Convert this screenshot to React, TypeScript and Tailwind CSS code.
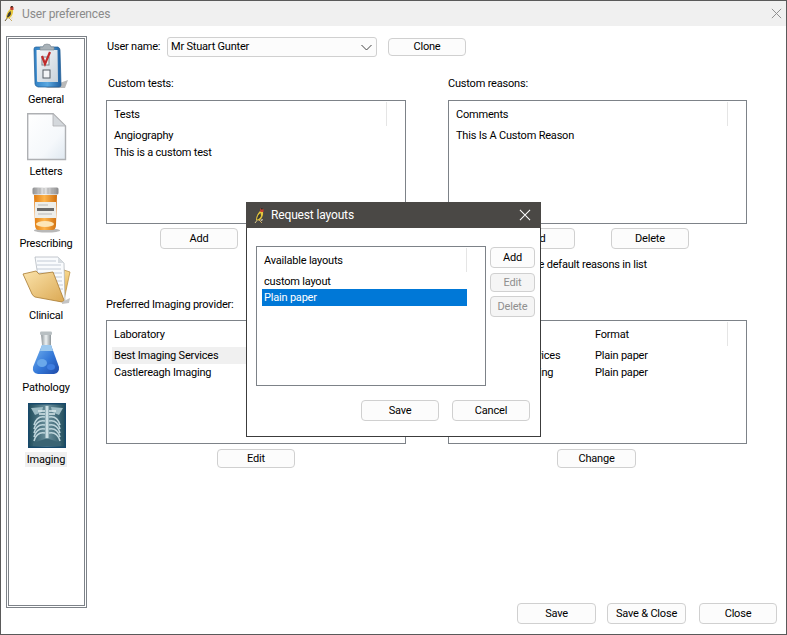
import React from "react";

function Finch({ dark = false }: { dark?: boolean }) {
  return (
    <svg width="11" height="17" viewBox="0 0 11 17" className="shrink-0">
      <path d="M1 16 L4 12" stroke={dark ? "#d8c890" : "#6b5a30"} strokeWidth="1" fill="none" />
      <path d="M5 13 L8 16" stroke="#c8a860" strokeWidth="1" fill="none" />
      <path d="M2 13 C2 9 4 6 6 4 L9 5 C9.5 8 8 12 5 13.5 Z" fill="#e6c63c" />
      <path d="M3 12 C3.5 9 5 7 6.5 6 L7 9 C6 11 4.5 12.5 3 12.5 Z" fill="#3a3a34" />
      <path d="M6 2 C7 0.8 9 1 9.5 2.5 L9.5 5 L6.5 5 Z" fill="#c8402e" />
      <path d="M7 1 L9 1.2 L8.6 2.6 L7 2.6 Z" fill="#2e2e2a" />
      <path d="M6 13 L9 12 L8 14 Z" fill="#efe3c2" />
    </svg>
  );
}

function Close({ color, size = 13 }: { color: string; size?: number }) {
  return (
    <svg width={size} height={size} viewBox="0 0 13 13" className="shrink-0">
      <path d="M1 1 L12 12 M12 1 L1 12" stroke={color} strokeWidth="1.1" fill="none" />
    </svg>
  );
}

function Btn({ children, cls, off = false }: { children: React.ReactNode; cls: string; off?: boolean }) {
  return (
    <div
      className={`flex items-center justify-center rounded-[4px] border border-[#d0d0d0] shrink-0 pt-[1px] ${off ? "bg-[#f5f5f5] text-[#8f8f8f]" : "bg-[#fcfcfc] text-black"} ${cls}`}
    >
      {children}
    </div>
  );
}

function Clipboard() {
  return (
    <svg width="36" height="46" viewBox="0 0 36 46">
      <defs>
        <linearGradient id="cbBlue" x1="0" y1="0" x2="1" y2="0">
          <stop offset="0" stopColor="#2f7fc4" />
          <stop offset="0.5" stopColor="#5aa8e0" />
          <stop offset="1" stopColor="#1f5f9f" />
        </linearGradient>
        <linearGradient id="cbPaper" x1="0" y1="0" x2="1" y2="1">
          <stop offset="0" stopColor="#f6f8fa" />
          <stop offset="1" stopColor="#c9d2da" />
        </linearGradient>
      </defs>
      <path d="M24 41 L35 37 L32 45 L12 45 Z" fill="#b9b9b9" />
      <path d="M1 6 Q1 4 3 4 L25 4 Q27 5 27 7 L28 42 Q28 44 26 44 L5 44 Q2 43 2 41 Z" fill="url(#cbBlue)" stroke="#1d5a92" strokeWidth="0.7" />
      <path d="M3.5 7 L24.5 7 L25 39 L5 39 Q4 39 4 38 Z" fill="url(#cbPaper)" />
      <path d="M7 4 L10 4 Q10 1 14 1 Q18 1 18 4 L21 4 L21 7 L7 7 Z" fill="#a9b2b8" stroke="#7b858c" strokeWidth="0.6" />
      <rect x="9" y="14" width="7" height="8" fill="#eef1f3" stroke="#7b828a" />
      <path d="M9 13 L12 21 L17 9" stroke="#c02a2a" strokeWidth="2.2" fill="none" />
      <rect x="10" y="27" width="7" height="8" fill="#f2f4f6" stroke="#555c64" />
    </svg>
  );
}

function Page() {
  return (
    <svg width="40" height="48" viewBox="0 0 40 48">
      <defs>
        <linearGradient id="pg" x1="0" y1="0" x2="1" y2="1">
          <stop offset="0" stopColor="#ffffff" />
          <stop offset="0.65" stopColor="#f5f8fb" />
          <stop offset="1" stopColor="#dfe8f0" />
        </linearGradient>
      </defs>
      <path d="M0.7 0.7 L26 0.7 L38.5 13 L38.5 46.5 L0.7 46.5 Z" fill="url(#pg)" stroke="#aeb0b3" strokeWidth="1.4" />
      <path d="M26 0.7 L26 13 L38.5 13 Z" fill="#d4d8dc" stroke="#aeb0b3" strokeWidth="0.8" />
    </svg>
  );
}

function Bottle() {
  return (
    <svg width="28" height="46" viewBox="0 0 28 46">
      <defs>
        <linearGradient id="capG" x1="0" y1="0" x2="1" y2="0">
          <stop offset="0" stopColor="#8f9092" />
          <stop offset="0.45" stopColor="#e8e8e8" />
          <stop offset="1" stopColor="#8a8a8c" />
        </linearGradient>
        <linearGradient id="btG" x1="0" y1="0" x2="1" y2="0">
          <stop offset="0" stopColor="#e07c12" />
          <stop offset="0.45" stopColor="#fdb44c" />
          <stop offset="1" stopColor="#d06f0e" />
        </linearGradient>
      </defs>
      <ellipse cx="15" cy="43.5" rx="13" ry="2" fill="#b8b8b8" />
      <path d="M2 8 L25 8 L24 38 Q24 43 20 43 L7 43 Q3 43 3 38 Z" fill="url(#btG)" />
      <rect x="0.5" y="0.5" width="26" height="7" rx="1.5" fill="url(#capG)" />
      <path d="M4 1 V7 M8 1 V7 M12 1 V7 M16 1 V7 M20 1 V7 M23 1 V7" stroke="#a4a4a4" strokeWidth="0.7" />
      <rect x="3" y="15" width="21" height="16" fill="#eeeeea" />
      <rect x="5" y="21" width="17" height="3" fill="#6a6a6a" />
      <path d="M6 18 H16 M6 27 H20" stroke="#b8b8b8" strokeWidth="1" />
      <ellipse cx="13" cy="37" rx="9" ry="3" fill="#fde6b8" />
    </svg>
  );
}

function Folder() {
  return (
    <svg width="49" height="49" viewBox="0 0 49 49">
      <defs>
        <linearGradient id="fdB" x1="0" y1="0" x2="0" y2="1">
          <stop offset="0" stopColor="#f8d88e" />
          <stop offset="1" stopColor="#d9a545" />
        </linearGradient>
        <linearGradient id="fdF" x1="0" y1="0" x2="1" y2="1">
          <stop offset="0" stopColor="#fbe3ab" />
          <stop offset="1" stopColor="#dba954" />
        </linearGradient>
      </defs>
      <path d="M42 14 L48 16 L42 44 L38 44 Z" fill="url(#fdB)" stroke="#b6883a" strokeWidth="0.7" />
      <path d="M13 1 L36 1 L42 7 L43 46 L19 40 Z" fill="#f9fbfd" stroke="#a9b0b8" strokeWidth="0.7" />
      <path d="M36 1 L36 7 L42 7 Z" fill="#d8dde2" />
      <path d="M15 5 L34 5 M15 9 L39 9 M15 13 L39 13 M16 17 L40 17 M16 21 L40 21 M17 25 L40 25 M17 29 L41 29 M18 33 L41 33" stroke="#b6c0cc" strokeWidth="0.8" />
      <path d="M1 18 L14 15 L17 18 L31 16 L42 44 Q42 46 40 46 L13 41 Q11 40 10 38 Z" fill="url(#fdF)" stroke="#a87a30" strokeWidth="0.8" />
      <path d="M40 46 L48 42 L47 47 L40 48 Z" fill="#c4c4c4" />
    </svg>
  );
}

function Flask() {
  return (
    <svg width="28" height="46" viewBox="0 0 28 46">
      <defs>
        <linearGradient id="flG" x1="0" y1="0" x2="1" y2="1">
          <stop offset="0" stopColor="#79b7f0" />
          <stop offset="0.55" stopColor="#3478d8" />
          <stop offset="1" stopColor="#1f4aa8" />
        </linearGradient>
        <linearGradient id="neck" x1="0" y1="0" x2="1" y2="0">
          <stop offset="0" stopColor="#8a9296" />
          <stop offset="0.5" stopColor="#eef2f3" />
          <stop offset="1" stopColor="#8c9498" />
        </linearGradient>
      </defs>
      <path d="M9 3 L19 3 L19 14 L10 14 Z" fill="url(#neck)" />
      <rect x="8" y="0.5" width="12" height="3.5" rx="1.2" fill="#b8bfc2" />
      <path d="M10 14 L19 14 L27 36 Q27.5 42 22 43 L6 43 Q0 42 1 36 Z" fill="url(#flG)" />
      <path d="M10 14 L19 14 L21 20 L8 20 Z" fill="#9cc8ee" />
      <ellipse cx="10" cy="32" rx="5" ry="4" fill="#6aa8ea" />
      <ellipse cx="19" cy="36" rx="4" ry="3" fill="#3f7ee0" />
    </svg>
  );
}

function Xray() {
  const ribsL = [14, 18, 22, 26, 30];
  return (
    <svg width="38" height="45" viewBox="0 0 38 45">
      <defs>
        <linearGradient id="xg" x1="0" y1="0" x2="1" y2="0">
          <stop offset="0" stopColor="#24505f" />
          <stop offset="0.5" stopColor="#6d929e" />
          <stop offset="1" stopColor="#24505f" />
        </linearGradient>
      </defs>
      <rect width="38" height="45" fill="#17496b" />
      <rect x="1.5" y="1.5" width="35" height="42" fill="url(#xg)" />
      <path d="M3 5 L15 4 L14 9 L7 12 Z M35 5 L23 4 L24 9 L31 12 Z" fill="#9dbcc4" />
      <rect x="17.5" y="3" width="3" height="32" fill="#c9dde2" />
      {ribsL.map((y) => (
        <React.Fragment key={y}>
          <path d={`M17 ${y} C12 ${y - 1} 8 ${y + 1} 6 ${y + 8}`} stroke="#bfd6dc" strokeWidth="1.6" fill="none" />
          <path d={`M21 ${y} C26 ${y - 1} 30 ${y + 1} 32 ${y + 8}`} stroke="#bfd6dc" strokeWidth="1.6" fill="none" />
        </React.Fragment>
      ))}
      <path d="M10 8 H17 M21 8 H28 M11 11 H17 M21 11 H27" stroke="#d9e7ea" strokeWidth="1.4" />
      <path d="M5 40 L17 36 L21 36 L33 40 L33 43 L5 43 Z" fill="#3b6473" />
    </svg>
  );
}

function NavItem({ icon, label, active = false, shift = "pb-[3px]" }: { icon: React.ReactNode; label: string; active?: boolean; shift?: string }) {
  return (
    <div className="flex flex-col items-center h-[72px] shrink-0">
      <div className={`h-[51px] flex items-end justify-center ${shift}`}>{icon}</div>
      <div className={`h-[15px] leading-[15px] px-[2px] ${active ? "bg-[#f0f0f0]" : ""}`}>{label}</div>
    </div>
  );
}

function Header({ title, sep }: { title: string; sep: string }) {
  return (
    <div className="relative h-[25px] pt-[4px] flex items-center pl-[7px]">
      <span>{title}</span>
      <div className={`absolute top-[1px] bottom-0 w-[1px] bg-[#e5e5e5] ${sep}`} />
    </div>
  );
}

export default function App() {
  return (
    <div className="relative w-[787px] h-[635px] box-border border border-[#5a5a5a] bg-white flex flex-col overflow-hidden text-black text-[11px] tracking-[-0.2px] [font-family:Roboto,sans-serif]">
      <div className="h-[25px] shrink-0 bg-[#f0f0f0] flex items-center pl-[3px] pr-[4px] text-[12px] tracking-[-0.15px] text-[#8a8a8a]">
        <Finch />
        <span className="ml-[7px]">User preferences</span>
        <div className="ml-auto">
          <Close color="#8a8a8a" size={11} />
        </div>
      </div>

      <div className="flex flex-1 min-h-0">
        <div className="ml-[5px] mt-[10px] w-[81px] h-[572px] shrink-0 border border-[#7d8288] p-[1px]">
          <div className="h-full border border-[#7d8288] flex flex-col pr-[1px] pt-[2px]">
            <NavItem icon={<Clipboard />} label="General" shift="ml-[9px] pb-[3px]" />
            <NavItem icon={<Page />} label="Letters" shift="ml-[2px] pb-[3px]" />
            <NavItem icon={<Bottle />} label="Prescribing" />
            <NavItem icon={<Folder />} label="Clinical" />
            <NavItem icon={<Flask />} label="Pathology" />
            <NavItem icon={<Xray />} label="Imaging" active shift="ml-[2px] pb-[4px]" />
          </div>
        </div>

        <div className="ml-[19px] flex-1 flex flex-col pt-[11px] pr-[9px] pb-[10px]">
          <div className="h-[20px] flex items-center">
            <span className="w-[61px] pl-[1px] shrink-0">User name:</span>
            <div className="w-[210px] h-[20px] rounded-[3px] border border-[#d0d0d0] bg-[#fcfcfc] flex items-center pl-[3px] pr-[3px] pt-[1px]">
              <span>Mr Stuart Gunter</span>
              <svg width="11" height="7" viewBox="0 0 11 7" className="ml-auto mr-[1px]">
                <path d="M0.5 1 L5.5 6 L10.5 1" stroke="#444" strokeWidth="1" fill="none" />
              </svg>
            </div>
            <Btn cls="ml-[11px] w-[78px] h-[18px]">Clone</Btn>
          </div>

          <div className="mt-[18px] grid grid-cols-[300px_299px] gap-x-[42px]">
            <div className="h-[18px] flex items-center pl-[2px]">Custom tests:</div>
            <div className="h-[18px] flex items-center">Custom reasons:</div>
          </div>

          <div className="mt-[7px] grid grid-cols-[300px_299px] gap-x-[42px]">
            <div className="h-[124px] border border-[#7d8288]">
              <Header title="Tests" sep="left-[279px]" />
              <div className="pl-[7px] leading-[17px] pt-[1px]">
                <div>Angiography</div>
                <div>This is a custom test</div>
              </div>
            </div>
            <div className="h-[124px] border border-[#7d8288]">
              <Header title="Comments" sep="left-[278px]" />
              <div className="pl-[7px] leading-[17px] pt-[1px]">
                <div>This Is A Custom Reason</div>
              </div>
            </div>
          </div>

          <div className="mt-[4px] grid grid-cols-[300px_299px] gap-x-[42px]">
            <div className="pl-[54px]">
              <Btn cls="w-[78px] h-[21px]">Add</Btn>
            </div>
            <div className="pl-[49px] flex gap-[36px]">
              <Btn cls="w-[78px] h-[21px]">Add</Btn>
              <Btn cls="w-[78px] h-[21px]">Delete</Btn>
            </div>
          </div>

          <div className="mt-[8px] h-[16px] w-[541px] flex items-center justify-end">
            <div className="w-[13px] h-[13px] border border-[#555] shrink-0" />
            <span className="ml-[7px]">Include default reasons in list</span>
          </div>

          <div className="mt-[23px] h-[18px] flex items-center">Preferred Imaging provider:</div>

          <div className="mt-[6px] grid grid-cols-[300px_299px] gap-x-[42px]">
            <div className="h-[124px] border border-[#7d8288]">
              <Header title="Laboratory" sep="left-[279px]" />
              <div className="pl-[5px] pr-[1px] leading-[17px] pt-[1px]">
                <div className="bg-[#f0f0f0] pl-[2px]">Best Imaging Services</div>
                <div className="pl-[2px]">Castlereagh Imaging</div>
              </div>
            </div>
            <div className="h-[124px] border border-[#7d8288]">
              <div className="relative h-[25px] pt-[4px] flex items-center pl-[7px]">
                <span className="w-[139px]">Laboratory</span>
                <span>Format</span>
                <div className="absolute top-[1px] bottom-0 left-[278px] w-[1px] bg-[#e5e5e5]" />
              </div>
              <div className="pl-[7px] leading-[17px] pt-[1px]">
                <div className="flex">
                  <span className="w-[139px]">Best Imaging Services</span>
                  <span>Plain paper</span>
                </div>
                <div className="flex">
                  <span className="w-[139px]">Castlereagh Imaging</span>
                  <span>Plain paper</span>
                </div>
              </div>
            </div>
          </div>

          <div className="mt-[5px] grid grid-cols-[300px_299px] gap-x-[42px]">
            <div className="pl-[111px]">
              <Btn cls="w-[78px] h-[19px]">Edit</Btn>
            </div>
            <div className="pl-[109px]">
              <Btn cls="w-[79px] h-[19px]">Change</Btn>
            </div>
          </div>

          <div className="mt-auto flex justify-end">
            <Btn cls="w-[79px] h-[21px]">Save</Btn>
            <Btn cls="ml-[11px] w-[79px] h-[21px]">Save &amp; Close</Btn>
            <Btn cls="ml-[13px] w-[78px] h-[21px]">Close</Btn>
          </div>
        </div>
      </div>

      {/* Request layouts dialog */}
      <div className="absolute left-[245px] top-[201px] w-[295px] h-[235px] box-border border border-[#3c3c3c] border-t-0 bg-white flex flex-col">
        <div className="h-[26px] -mx-[1px] shrink-0 bg-[#4a4845] flex items-center pl-[8px] pr-[10px] text-[12px] tracking-[-0.15px] text-white">
          <Finch dark />
          <span className="ml-[6px]">Request layouts</span>
          <div className="ml-auto">
            <Close color="#ffffff" size={12} />
          </div>
        </div>
        <div className="flex pl-[9px] pt-[18px] pr-[5px]">
          <div className="w-[230px] h-[140px] border border-[#7d8288] shrink-0">
            <div className="relative h-[25px] pt-[4px] flex items-center pl-[7px]">
              <span>Available layouts</span>
              <div className="absolute top-[1px] bottom-0 left-[209px] w-[1px] bg-[#e5e5e5]" />
            </div>
            <div className="pl-[5px] w-[210px] leading-[17px]">
              <div className="pl-[2px] pt-[1px] h-[17px]">custom layout</div>
              <div className="pl-[2px] bg-[#0078d7] text-white">Plain paper</div>
            </div>
          </div>
          <div className="ml-[4px] flex flex-col">
            <Btn cls="w-[45px] h-[21px] mt-[1px]">Add</Btn>
            <Btn cls="w-[45px] h-[19px] mt-[5px]" off>Edit</Btn>
            <Btn cls="w-[45px] h-[21px] mt-[4px]" off>Delete</Btn>
          </div>
        </div>
        <div className="mt-[14px] flex justify-end pr-[10px] gap-[13px]">
          <Btn cls="w-[78px] h-[21px]">Save</Btn>
          <Btn cls="w-[78px] h-[21px]">Cancel</Btn>
        </div>
      </div>
    </div>
  );
}
